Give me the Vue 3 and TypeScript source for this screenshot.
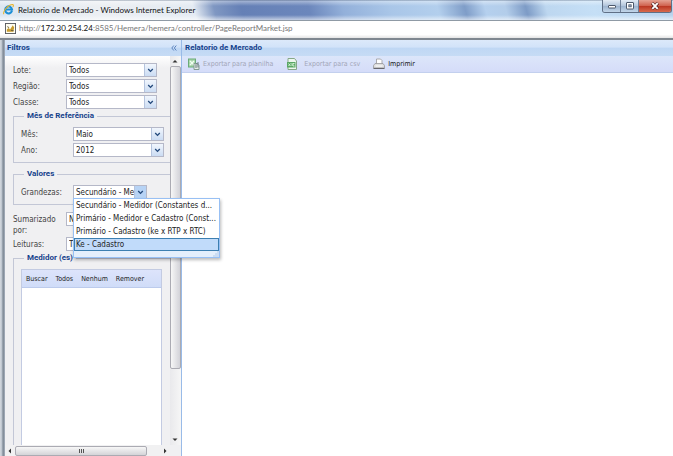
<script setup lang="ts">
import { ref } from 'vue'

interface Field {
  id: string
  label: string
  value: string
}

const generalFields: Field[] = [
  { id: 'lote', label: 'Lote:', value: 'Todos' },
  { id: 'regiao', label: 'Região:', value: 'Todos' },
  { id: 'classe', label: 'Classe:', value: 'Todos' },
]

const periodFields: Field[] = [
  { id: 'mes', label: 'Mês:', value: 'Maio' },
  { id: 'ano', label: 'Ano:', value: '2012' },
]

const summaryFields: Field[] = [
  { id: 'sumarizado', label: 'Sumarizado por:', value: 'N' },
  { id: 'leituras', label: 'Leituras:', value: 'T' },
]

const quantities: string[] = [
  'Secundário - Medidor (Constantes d...',
  'Primário - Medidor e Cadastro (Const...',
  'Primário - Cadastro (ke x RTP x RTC)',
  'Ke - Cadastro',
]

const meterActions: string[] = ['Buscar', 'Todos', 'Nenhum', 'Remover']

const quantity = ref(quantities[0])
const highlighted = ref(3)
</script>

<template>
  <div class="window">
    <header class="titlebar">
      <svg class="ie" viewBox="0 0 12 12" aria-hidden="true">
        <path d="M9.8 7.4A3.8 3.8 0 1 1 9.9 6H3.2" fill="none" stroke="#1d8fd6" stroke-width="2.200" />
        <path d="M1 11C-.6 9 4 3 8 1.200C11-.2 12 1 10.800 3.200" fill="none" stroke="#e8b52c" stroke-width="1.200" />
      </svg>
      <h1>Relatorio de Mercado - Windows Internet Explorer</h1>
      <div class="controls">
        <button type="button" aria-label="Minimizar">
          <svg viewBox="0 0 10 8"><rect x="1.500" y="3.500" width="7" height="2.500" rx=".5" fill="#fff" stroke="#4c586b" /></svg>
        </button>
        <button type="button" aria-label="Maximizar">
          <svg viewBox="0 0 10 8"><rect x="1.500" y=".5" width="7" height="6.500" rx=".5" fill="#fff" stroke="#4c586b" /><rect x="3.800" y="2.800" width="2.400" height="2" fill="#9fb2cc" stroke="#4c586b" stroke-width=".8" /></svg>
        </button>
        <button type="button" class="close" aria-label="Fechar">
          <svg viewBox="0 0 10 8"><path d="M2 1l6 6M8 1L2 7" stroke="#5c2c2c" stroke-width="3.200" /><path d="M2.300 1.200l5.400 5.600M7.700 1.200L2.300 6.800" stroke="#fff" stroke-width="1.900" /></svg>
        </button>
      </div>
    </header>

    <div class="address">
      <svg viewBox="0 0 12 12" aria-hidden="true">
        <rect x=".5" y=".5" width="11" height="11" fill="#fffdf0" stroke="#55585c" />
        <path d="M2 9.500V7L4 5.500 5.500 7 8.500 2.500 10 5 9 9.500z" fill="#c79b2d" />
        <path d="M2.500 4l2 1M6.500 8l3 .5" stroke="#665b35" />
      </svg>
      <p>http://<b>172.30.254.24</b>:8585/Hemera/hemera/controller/PageReportMarket.jsp</p>
    </div>

    <main class="content">
      <aside class="filters">
        <div class="panel-head">
          <h2>Filtros</h2>
          <button type="button" class="collapse" aria-label="Recolher filtros">
            <svg viewBox="0 0 6 6"><path d="M2.800.5L.8 3l2 2.500M5.300.5l-2 2.500 2 2.500" fill="none" stroke="#5b83bd" /></svg>
          </button>
        </div>
        <div class="scroll-area">
          <form class="form" @submit.prevent>
            <div class="rows">
              <div v-for="f in generalFields" :key="f.id" class="row">
                <label :for="f.id">{{ f.label }}</label>
                <span class="combo">
                  <select :id="f.id"><option>{{ f.value }}</option></select>
                  <svg viewBox="0 0 12 12"><path d="M3.500 5L6 7.500l2.500-2.500" /></svg>
                </span>
              </div>
            </div>

            <fieldset>
              <legend>Mês de Referência</legend>
              <div class="rows">
                <div v-for="f in periodFields" :key="f.id" class="row">
                  <label :for="f.id">{{ f.label }}</label>
                  <span class="combo">
                    <select :id="f.id"><option>{{ f.value }}</option></select>
                    <svg viewBox="0 0 12 12"><path d="M3.500 5L6 7.500l2.500-2.500" /></svg>
                  </span>
                </div>
              </div>
            </fieldset>

            <fieldset class="values">
              <legend>Valores</legend>
              <div class="row">
                <label for="grandezas">Grandezas:</label>
                <span class="combo short open">
                  <select id="grandezas" v-model="quantity">
                    <option v-for="q in quantities" :key="q">{{ q }}</option>
                  </select>
                  <svg viewBox="0 0 12 12"><path d="M3.500 5L6 7.500l2.500-2.500" /></svg>
                  <span class="popup">
                    <span class="options" role="listbox" aria-label="Grandezas">
                      <span
                        v-for="(q, i) in quantities"
                        :key="q"
                        role="option"
                        :aria-selected="i === highlighted"
                        :class="{ active: i === highlighted }"
                        @mouseenter="highlighted = i"
                        @click="quantity = q"
                      >{{ q }}</span>
                    </span>
                    <svg class="grip" viewBox="0 0 6 6"><path d="M5 .5v1M5 2.500v1M3 2.500v1M5 4.500v1M3 4.500v1M1 4.500v1" stroke="#7fa5d8" /></svg>
                  </span>
                </span>
              </div>
            </fieldset>

            <div class="rows summary">
              <div v-for="f in summaryFields" :key="f.id" class="row">
                <label :for="f.id">{{ f.label }}</label>
                <span class="combo">
                  <select :id="f.id"><option>{{ f.value }}</option></select>
                  <svg viewBox="0 0 12 12"><path d="M3.500 5L6 7.500l2.500-2.500" /></svg>
                </span>
              </div>
            </div>

            <fieldset class="meters">
              <legend>Medidor (es)</legend>
              <div class="grid">
                <div class="grid-bar">
                  <button v-for="a in meterActions" :key="a" type="button">{{ a }}</button>
                </div>
              </div>
            </fieldset>
          </form>

          <div class="vbar">
            <svg viewBox="0 0 10 10"><path d="M2.500 6.500h5L5 4z" /></svg>
            <div class="thumb"></div>
            <svg viewBox="0 0 10 10"><path d="M2.500 3.500h5L5 6z" /></svg>
          </div>
          <div class="hbar">
            <svg viewBox="0 0 10 10"><path d="M6 2.500v5L3.500 5z" /></svg>
            <div class="thumb"><i></i><i></i><i></i></div>
            <svg viewBox="0 0 10 10"><path d="M4 2.500v5L6.500 5z" /></svg>
          </div>
        </div>
      </aside>

      <section class="report">
        <div class="panel-head"><h2>Relatorio de Mercado</h2></div>
        <div class="toolbar">
          <button type="button" disabled>
            <svg viewBox="0 0 12 12">
              <rect x=".5" y="1" width="7" height="8" fill="#a8d5aa" stroke="#6bab78" />
              <path d="M2 3l4 4M6 3L2 7" stroke="#f2fff2" stroke-width="1.300" />
              <path d="M6 5.500h3l2 2v4H6z" fill="#e7eee9" stroke="#839b91" />
              <path d="M8 10V6.500l2-2v5" fill="none" stroke="#64777a" />
            </svg>
            Exportar para planilha
          </button>
          <button type="button" class="csv" disabled>
            <svg viewBox="0 0 12 12">
              <path d="M2 .5h6.500L10.500 3v8.500H2z" fill="#edf8ee" stroke="#86a889" />
              <rect x="1" y="4" width="8.500" height="5.500" fill="#5aa765" />
              <path d="M2.500 5.500l2 2.500M4.500 5.500l-2 2.500M6 5v3M8.500 5.500H7V8h1.500" fill="none" stroke="#e7ffe8" stroke-width=".8" />
            </svg>
            Exportar para csv
          </button>
          <button type="button">
            <svg viewBox="0 0 12 12">
              <path d="M3.500 6V1h4L9 2.500V6" fill="#fff" stroke="#a9a9ad" />
              <path d="M2 5.500h8l1.500 2V10H.5V7.500z" fill="#dedede" stroke="#98989c" stroke-width=".8" />
              <path d="M.5 10.500h11" stroke="#66666c" />
              <path d="M2.500 8h7" stroke="#fff" />
            </svg>
            Imprimir
          </button>
        </div>
        <div class="result"></div>
      </section>
    </main>
  </div>
</template>

<style>
body {
  margin: 0;
}
</style>

<style scoped>
.window {
  box-sizing: border-box;
  display: flex;
  flex-direction: column;
  height: 100vh;
  overflow: hidden;
  background: #fff;
  color: #222;
  font: 8px/12px "DejaVu Sans Condensed", "DejaVu Sans", Tahoma, sans-serif;
}
h1, h2, p {
  margin: 0;
}
button {
  margin: 0;
  padding: 0;
  border: 0;
  background: none;
  color: inherit;
  font: inherit;
}
svg {
  display: block;
  flex: none;
}
.titlebar {
  display: flex;
  gap: 4px;
  height: 20px;
  padding-left: 3px;
  border-bottom: 1px solid #8f9aa5;
  background:
    linear-gradient(180deg, #5a6a80aa 0, #fff6 1px, #fff0 6px, #fff0 15px, #fff9 100%),
    linear-gradient(75deg, #dce6f0 0, #eceff3 15%, #e4ebf3 29%, #7f97c2 32%, #6580b6 36%, #6c87bc 46%, #93b0da 51%, #a9c6e8 58%, #b3cfed 65%, #7f9dc8 69%, #b5d0ee 72%, #b3cdea 75%, #7d9bc6 78%, #bdd7f0 81%, #c5dff6 88%, #b8d2ec 100%);
}
.ie {
  width: 11px;
  height: 11px;
  margin-top: 4px;
}
h1 {
  flex: 1;
  color: #111;
  font: 8px/20px Lato, sans-serif;
  white-space: nowrap;
}
.controls {
  display: flex;
  height: 12px;
  margin-right: 1px;
  border: 1px solid #5f6f86;
  border-top: 0;
  border-radius: 0 0 3px 3px;
  overflow: hidden;
}
.controls button {
  display: grid;
  place-items: center;
  width: 18px;
  border-right: 1px solid #6f8098;
  background: linear-gradient(#e2ebf5, #b0c3da 50%, #9bb2cd 50%, #c2d6ea);
}
.controls svg {
  width: 10px;
  height: 8px;
}
.controls .close {
  width: 32px;
  border: 0;
  background: linear-gradient(#e5a293, #cf604c 50%, #b93521 50%, #d86a4d);
}
.address {
  display: flex;
  align-items: center;
  box-sizing: border-box;
  gap: 3px;
  height: 19px;
  padding: 0 0 2px 5px;
  border-bottom: 2px solid #7f8790;
  background: linear-gradient(#fff 80%, #e4e4e4);
  color: #777;
  font: 8px/15px Lato, sans-serif;
}
.address svg {
  width: 11px;
  height: 11px;
}
.address b {
  color: #111;
  font-weight: 400;
}
.content {
  display: flex;
  flex: 1;
  min-height: 0;
  padding-left: 5px;
  background: linear-gradient(90deg, #d5dae0 0, #b9c1cb 2px, #78838f 3px, #a9b2bf 5px);
}
.filters {
  display: flex;
  flex-direction: column;
  width: 176px;
  border-right: 1px solid #99bbe8;
}
.panel-head {
  display: flex;
  align-items: center;
  justify-content: space-between;
  box-sizing: border-box;
  flex: none;
  height: 16px;
  padding: 0 4px 0 2px;
  background: linear-gradient(#dce9fa, #d2e3f9 45%, #bfd7f4 50%, #c6dbf5);
}
h2 {
  color: #15428b;
  font: bold 8px/16px Roboto, sans-serif;
}
.collapse svg {
  width: 6px;
  height: 6px;
}
.scroll-area {
  display: grid;
  flex: 1;
  grid-template-columns: minmax(0, 1fr) 11px;
  grid-template-rows: minmax(0, 1fr) 11px;
  min-height: 0;
  background: #f0f0f2;
}
.form {
  display: flex;
  flex-direction: column;
  min-height: 0;
  padding: 7px 0 0 8px;
  background: linear-gradient(#fff, #f0f0f2 12px);
}
.rows {
  display: flex;
  flex-direction: column;
  gap: 2px;
}
.row {
  display: flex;
  height: 14px;
  color: #444;
}
.row label {
  width: 53px;
  flex: none;
  line-height: 16px;
}
.summary {
  gap: 11px;
  margin-top: 7px;
}
.summary label {
  padding-top: 2px;
  line-height: 11px;
}
.combo {
  position: relative;
  display: grid;
  grid-template-columns: minmax(0, 1fr) 12px;
  box-sizing: border-box;
  width: 91px;
  height: 14px;
  border: 1px solid #b5b8c8;
  background: #fff;
}
.combo.short {
  width: 74px;
}
.combo select {
  appearance: none;
  grid-area: 1 / 1;
  min-width: 0;
  margin: 0;
  padding: 1px 0 0 2px;
  border: 0;
  outline: 0;
  background: none;
  color: #222;
  font: inherit;
  overflow: hidden;
  text-overflow: clip;
}
.combo > svg {
  grid-area: 1 / 2;
  width: 11px;
  height: 12px;
  border-left: 1px solid #b5c4de;
  background: linear-gradient(#f1f6fd, #cbdcf3);
  pointer-events: none;
}
.combo > svg path {
  fill: none;
  stroke: #244a7c;
  stroke-width: 1.5;
}
.combo.open > svg {
  background: #b7d3f5;
}
fieldset {
  min-width: 0;
  margin: 0;
  padding: 5px 0 5px 7px;
  border: 1px solid #c3c7d6;
  border-right: 0;
}
.form > .rows + fieldset {
  margin-top: 1px;
}
legend {
  margin-left: 3px;
  padding: 0 3px;
  color: #15428b;
  font: bold 8px/12px Roboto, sans-serif;
}
fieldset .row label {
  width: 52px;
}
fieldset.values {
  margin-top: 5px;
}
.popup {
  position: absolute;
  z-index: 2;
  top: 12px;
  left: -1px;
  width: 145px;
  border: 1px solid #98c0f4;
  background: #e4effc;
  box-shadow: 1px 2px 3px #0004;
}
.options {
  display: flex;
  flex-direction: column;
  background: #fff;
}
.options span {
  height: 11px;
  padding: 0 1px;
  border: 1px solid #fff;
  color: #222;
  line-height: 12px;
  white-space: nowrap;
}
.options .active {
  border-color: #3c7fb1;
  background: #c1dbfa;
}
.grip {
  width: 6px;
  height: 6px;
  margin-left: auto;
}
fieldset.meters {
  display: flex;
  flex: 1;
  flex-direction: column;
  min-height: 0;
  padding-bottom: 0;
  border-bottom: 0;
}
.grid {
  flex: 1;
  margin-right: 8px;
  border: 1px solid #c3cbe2;
  border-bottom: 0;
  background: #fff;
}
.grid-bar {
  display: flex;
  gap: 8px;
  height: 17px;
  padding-left: 4px;
  border-bottom: 1px solid #bccbec;
  background: linear-gradient(#dde4fb, #d0dcf8);
  font-size: 7px;
}
.vbar {
  display: flex;
  flex-direction: column;
  justify-content: space-between;
  background: linear-gradient(90deg, #e9e9ec, #f6f6f6);
}
.vbar svg, .hbar svg {
  width: 10px;
  height: 10px;
  fill: #333;
}
.thumb {
  box-sizing: border-box;
  border: 1px solid #ababb3;
  border-radius: 2px;
}
.vbar .thumb {
  height: 78%;
  margin-bottom: auto;
  background: linear-gradient(90deg, #f7f7f7, #d2d2d8);
}
.hbar {
  display: flex;
  align-items: center;
  background: #f1f1f2;
}
.hbar .thumb {
  display: flex;
  align-items: center;
  justify-content: center;
  gap: 1px;
  width: 80%;
  height: 10px;
  margin-right: auto;
  background: linear-gradient(#f7f7f7, #d4d4d8);
}
.thumb i {
  width: 1px;
  height: 4px;
  background: #555;
}
.report {
  display: flex;
  flex: 1;
  flex-direction: column;
  min-width: 0;
}
.report .panel-head {
  padding-left: 3px;
}
.toolbar {
  display: flex;
  flex: none;
  gap: 13px;
  height: 16px;
  padding-left: 6px;
  border-bottom: 1px solid #c3d0ee;
  background: linear-gradient(#dce6fa, #d5dcf9);
  font-size: 7px;
}
.toolbar button {
  display: flex;
  align-items: center;
  gap: 3px;
  color: #111;
}
.toolbar button:disabled {
  color: #a2a6b8;
}
.toolbar svg {
  width: 12px;
  height: 12px;
}
.toolbar .csv {
  gap: 6px;
}
.result {
  flex: 1;
  background: #fff;
}
</style>
